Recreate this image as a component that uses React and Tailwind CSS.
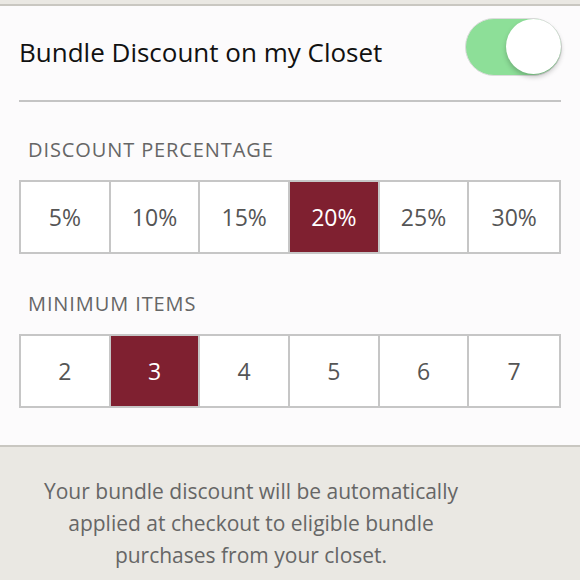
import { useState } from "react";

const percents = ["5%", "10%", "15%", "20%", "25%", "30%"];
const items = ["2", "3", "4", "5", "6", "7"];

function Segmented({ options, value, onChange }) {
  return (
    <div className="mx-[19px] grid grid-cols-6 border-2 border-[#c6c6c6] bg-white">
      {options.map((opt, i) => (
        <button
          key={opt}
          onClick={() => onChange(opt)}
          className={
            "h-[70px] flex items-center justify-center text-[23px] " +
            (i < options.length - 1 ? "border-r-2 border-[#c6c6c6] " : "") +
            (opt === value ? "bg-[#7f2030] text-white" : "text-[#555]")
          }
        >
          {opt}
        </button>
      ))}
    </div>
  );
}

export default function App() {
  const [on, setOn] = useState(true);
  const [pct, setPct] = useState("20%");
  const [min, setMin] = useState("3");

  return (
    <div
      className="w-[580px] h-[580px] overflow-hidden bg-[#eae8e3]"
      style={{ fontFamily: "'Open Sans', 'Liberation Sans', sans-serif" }}
    >
      <div className="h-[4px]" />
      <div className="bg-[#fcfbfc] border-t-2 border-b-2 border-[#c9c7c1] h-[443px]">
        {/* header */}
        <div className="flex items-start justify-between pl-[19px] pr-[18px] pt-[12px] h-[94px]">
          <span className="mt-[16px] text-[26px] leading-[36px] text-[#111]">
            Bundle Discount on my Closet
          </span>
          <button
            onClick={() => setOn(!on)}
            className={
              "relative w-[97px] h-[58px] rounded-full border border-[#dcdcdc] " +
              (on ? "bg-[#8ddf98]" : "bg-[#e5e5e5]")
            }
          >
            <span
              className={
                "absolute top-[0px] w-[55px] h-[55px] rounded-full bg-white shadow-[0_3px_5px_rgba(0,0,0,0.22)] " +
                (on ? "right-[0px]" : "left-[0px]")
              }
            />
          </button>
        </div>
        <div className="mx-[19px] h-[2px] bg-[#c4c4c4]" />

        <div className="pl-[28px] pt-[35px] pb-[17px] text-[20px] tracking-[0.9px] text-[#666] leading-[26px]">
          DISCOUNT PERCENTAGE
        </div>
        <Segmented options={percents} value={pct} onChange={setPct} />

        <div className="pl-[28px] pt-[37px] pb-[17px] text-[20px] tracking-[0.9px] text-[#666] leading-[26px]">
          MINIMUM ITEMS
        </div>
        <Segmented options={items} value={min} onChange={setMin} />
      </div>

      <p className="pt-[28px] pl-[20px] pr-[98px] text-center text-[21px] leading-[32px] text-[#666]">
        Your bundle discount will be automatically applied at checkout to eligible bundle
        purchases from your closet.
      </p>
    </div>
  );
}
